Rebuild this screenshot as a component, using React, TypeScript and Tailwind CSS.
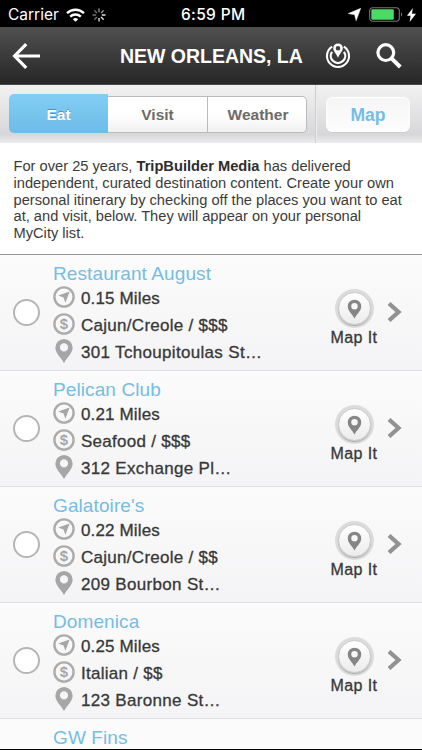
import React from 'react';

type Place = {
  name: string;
  distance: string;
  category: string;
  address: string;
};

const places: Place[] = [
  { name: 'Restaurant August', distance: '0.15 Miles', category: 'Cajun/Creole / $$$', address: '301 Tchoupitoulas St…' },
  { name: 'Pelican Club', distance: '0.21 Miles', category: 'Seafood / $$$', address: '312 Exchange Pl…' },
  { name: "Galatoire's", distance: '0.22 Miles', category: 'Cajun/Creole / $$', address: '209 Bourbon St…' },
  { name: 'Domenica', distance: '0.25 Miles', category: 'Italian / $$', address: '123 Baronne St…' },
];

const PIN = 'M10 0a9 9 0 0 0-9 9c0 6 6 10 9 16 3-6 9-10 9-16a9 9 0 0 0-9-9Zm0 4.5a4.3 4.3 0 1 1 0 8.6 4.3 4.3 0 0 1 0-8.6Z';

const spokes = [0, 45, 90, 135, 180, 225, 270, 315];

const StatusBar = () => (
  <div className="flex h-[27px] shrink-0 items-center bg-black pt-[2px] text-white font-['Inter','Liberation_Sans',sans-serif]">
    <div className="flex w-[181px] items-center pl-[8px]">
      <span className="w-[51px] text-[15.5px] leading-none whitespace-nowrap">Carrier</span>
      <svg className="ml-[7px] h-[14px] w-[19px]" viewBox="0 0 19 14" fill="none" stroke="white" strokeWidth="2.4">
        <path d="M1 5.2a12.2 12.2 0 0 1 17 0" />
        <path d="M4.2 8.6a7.7 7.7 0 0 1 10.6 0" />
        <path d="M6.8 11.2a4 4 0 0 1 5.4 0L9.5 13.8Z" fill="white" stroke="none" />
      </svg>
      <svg className="ml-[7px] h-[14px] w-[14px]" viewBox="-7 -7 14 14" stroke="white" strokeWidth="1.3" strokeLinecap="round">
        {spokes.map((a, i) => (
          <path key={a} d="M0-3.3V-6" transform={`rotate(${a})`} opacity={i < 2 ? 0.6 : i < 5 ? 0.9 : 0.45} />
        ))}
      </svg>
    </div>
    <span className="w-[66px] text-[15.5px] font-medium leading-none tracking-[0.35px] whitespace-nowrap">6:59 PM</span>
    <div className="ml-auto flex items-center pr-[6px]">
      <svg className="h-[13px] w-[13px]" viewBox="0 0 13 13" fill="white">
        <path d="M12.8.2 8.1 12.8 6.6 6.8.2 5.6Z" stroke="white" strokeWidth=".4" />
      </svg>
      <svg className="ml-[8px] h-[15px] w-[34px]" viewBox="0 0 34 15">
        <rect x=".7" y=".7" width="29.6" height="13.6" rx="3.2" fill="none" stroke="#777" strokeWidth="1.1" />
        <rect x="2.3" y="2.3" width="22.5" height="10.4" rx="1.2" fill="#4cd964" />
        <path d="M32 5.3c1.6.8 1.6 3.6 0 4.4Z" fill="#777" />
      </svg>
      <svg className="ml-[4px] h-[14px] w-[9px]" viewBox="0 0 9 14" fill="white">
        <path d="M5.8 0 0 7.8h3.6L2.6 14 9 5.7H5Z" />
      </svg>
    </div>
  </div>
);

const Header = () => (
  <header className="flex h-[58px] shrink-0 items-center border-b border-[#4b4749] bg-linear-to-b from-[#505050] to-[#272727] text-white">
    <svg className="ml-[12px] h-[26px] w-[29px]" viewBox="0 0 29 26" fill="none" stroke="white" strokeWidth="3.2">
      <path d="M28 13H3M14.2 1.2 2.6 13l11.6 11.8" />
    </svg>
    <h1 className="ml-[79px] w-[190px] pt-[3px] text-[19.5px] font-bold leading-none tracking-[-0.02px] whitespace-nowrap">NEW ORLEANS, LA</h1>
    <svg className="ml-[15px] h-[26px] w-[26px]" viewBox="0 0 26 26" fill="none" stroke="white">
      <path d="M7.2 3.6a11 11 0 1 0 11.6 0" strokeWidth="2.1" />
      <path d="M7 8.8a7.2 7.2 0 1 0 12 0" strokeWidth="2.3" />
      <path d="M13 .4a4.8 4.8 0 0 0-4.8 4.8c0 3 3.2 5.2 4.8 9.7 1.6-4.5 4.8-6.7 4.8-9.7A4.8 4.8 0 0 0 13 .4Zm0 2.5a2.3 2.3 0 1 1 0 4.6 2.3 2.3 0 0 1 0-4.6Z" fill="white" fillRule="evenodd" stroke="none" />
    </svg>
    <svg className="ml-[25px] h-[26px] w-[26px]" viewBox="0 0 26 26" fill="none" stroke="white">
      <circle cx="9.8" cy="9.6" r="7.9" strokeWidth="3.2" />
      <path d="m15.5 15.4 8.8 8.6" strokeWidth="4" />
    </svg>
  </header>
);

const TabBar = () => (
  <nav className="flex h-[58px] shrink-0 bg-linear-to-b from-[#f2f2f3] via-[#d7d7d9] via-85% to-[#ededee] text-[15.5px] font-bold text-[#6d6b68]">
    <div className="flex h-full w-[316px] items-start border-r border-[#cfcfd1] pl-[9px] pt-[9px]">
      <button className="h-[39px] w-[99px] rounded-l-[5px] bg-linear-to-b from-[#82cef5] to-[#6dbbe7] pt-[3px] text-white [text-shadow:0_-1px_0_#4f8fb3]">Eat</button>
      <button className="mt-[2px] h-[37px] w-[100px] border-y border-r border-[#bbb] bg-linear-to-b from-white from-50% to-[#f0f0f0]">Visit</button>
      <button className="mt-[2px] h-[37px] w-[99px] rounded-r-[5px] border-y border-r border-[#bbb] bg-linear-to-b from-white from-50% to-[#f0f0f0] pl-[2px]">Weather</button>
    </div>
    <div className="flex flex-1 items-start border-l border-[#ececed] pl-[9px] pt-[12px]">
      <button className="h-[35px] w-[84px] rounded-[6px] border border-white bg-linear-to-b from-[#f6f6f7] to-[#fcfcfc] pt-px text-[17.5px] text-[#75bde5] shadow-[0_1px_1px_#ccc]">Map</button>
    </div>
  </nav>
);

const Detail = ({ icon, children, className }: { icon: React.ReactNode; children: React.ReactNode; className: string }) => (
  <div className={`flex items-center ${className}`}>
    <span className="flex w-[22px] justify-center">{icon}</span>
    <span className="ml-[6px] text-[17px] leading-none whitespace-nowrap [-webkit-text-stroke:0.3px_#383838]">{children}</span>
  </div>
);

const PlaceRow = ({ place }: { place: Place }) => (
  <li className="flex h-[116px] shrink-0 border-b border-[#dedfe2] bg-linear-to-b from-[#fbfbfb] to-[#f4f4f6]">
    <div className="mt-[44px] ml-[13px] size-[27px] shrink-0 rounded-full border-2 border-[#b5b5b5] bg-white" />
    <div className="ml-[13px] w-[240px] pt-[9px] text-[#383838]">
      <h2 className="h-[23px] text-[19px] leading-[20px] tracking-[0.1px] text-[#75bde5] whitespace-nowrap">{place.name}</h2>
      <Detail
        className="h-[23px]"
        icon={
          <svg className="mb-[3px] size-[22px]" viewBox="0 0 22 22">
            <circle cx="11" cy="11" r="9.6" fill="none" stroke="#ababab" strokeWidth="2.4" />
            <path d="m16.6 5.4-4.2 11.4-1.9-5.2-5.2-2Z" fill="#a6a6a6" />
          </svg>
        }
      >
        <span className="tracking-[0.15px]">{place.distance}</span>
      </Detail>
      <Detail
        className="mt-[4px] h-[23px]"
        icon={
          <svg className="mb-[4px] size-[22px]" viewBox="0 0 22 22">
            <circle cx="11" cy="11" r="9.6" fill="none" stroke="#ababab" strokeWidth="2.4" />
            <text x="11" y="16.3" textAnchor="middle" fontSize="15" fontWeight="700" fill="#a6a6a6">$</text>
          </svg>
        }
      >
        <span className="tracking-[0.28px]">{place.category}</span>
      </Detail>
      <Detail
        className="mt-[3px] h-[24px]"
        icon={
          <svg className="mb-[3px] h-[24px] w-[20px]" viewBox="0 0 20 25">
            <path d={PIN} fill="#a6a6a6" fillRule="evenodd" />
          </svg>
        }
      >
        <span className="tracking-[0.32px]">{place.address}</span>
      </Detail>
    </div>
    <div className="ml-[33px] flex w-[56px] flex-col items-center pt-[34px]">
      <div className="flex size-[39px] items-center justify-center rounded-full bg-[#dcdcdc]">
        <div className="flex size-[33px] items-center justify-center rounded-full border border-[#cacaca] bg-linear-to-b from-white to-[#ececec] shadow-[0_1px_1px_#aaa]">
          <svg className="h-[20px] w-[15px]" viewBox="0 0 20 25">
            <path d={PIN} fill="#858585" fillRule="evenodd" />
          </svg>
        </div>
      </div>
      <span className="mt-[1px] text-[16px] leading-[18px] tracking-[0.4px] whitespace-nowrap text-[#383838] [-webkit-text-stroke:0.3px_#383838]">Map It</span>
    </div>
    <svg className="mt-[47px] ml-[5px] h-[20px] w-[15px]" viewBox="0 0 15 20" fill="none" stroke="#929292" strokeWidth="4.2">
      <path d="m2 1.5 9.5 8.5L2 18.5" />
    </svg>
  </li>
);

export default function App() {
  return (
    <div className="flex h-[750px] w-[422px] flex-col overflow-hidden border-b border-black bg-[#fbfbfb] font-['Liberation_Sans',Arial,sans-serif]">
      <StatusBar />
      <Header />
      <TabBar />
      <section className="h-[112px] shrink-0 border-b border-[#969696] bg-white pt-[15px] pl-[13.5px] text-[14.67px] leading-[16.8px] whitespace-nowrap text-[#3b3b3b]">
        For over 25 years, <b className="text-[#2d2d2d]">TripBuilder Media</b> has delivered
        <br />
        independent, curated destination content. Create your own
        <br />
        personal itinerary by checking off the places you want to eat
        <br />
        at, and visit, below. They will appear on your personal
        <br />
        MyCity list.
      </section>
      <ul className="flex flex-col">
        {places.map((place) => (
          <PlaceRow key={place.name} place={place} />
        ))}
        {/* next row only peeks in above the fold */}
        <li className="pt-[9px] pl-[53px]">
          <h2 className="text-[19px] leading-[20px] tracking-[0.1px] text-[#75bde5]">GW Fins</h2>
        </li>
      </ul>
    </div>
  );
}
